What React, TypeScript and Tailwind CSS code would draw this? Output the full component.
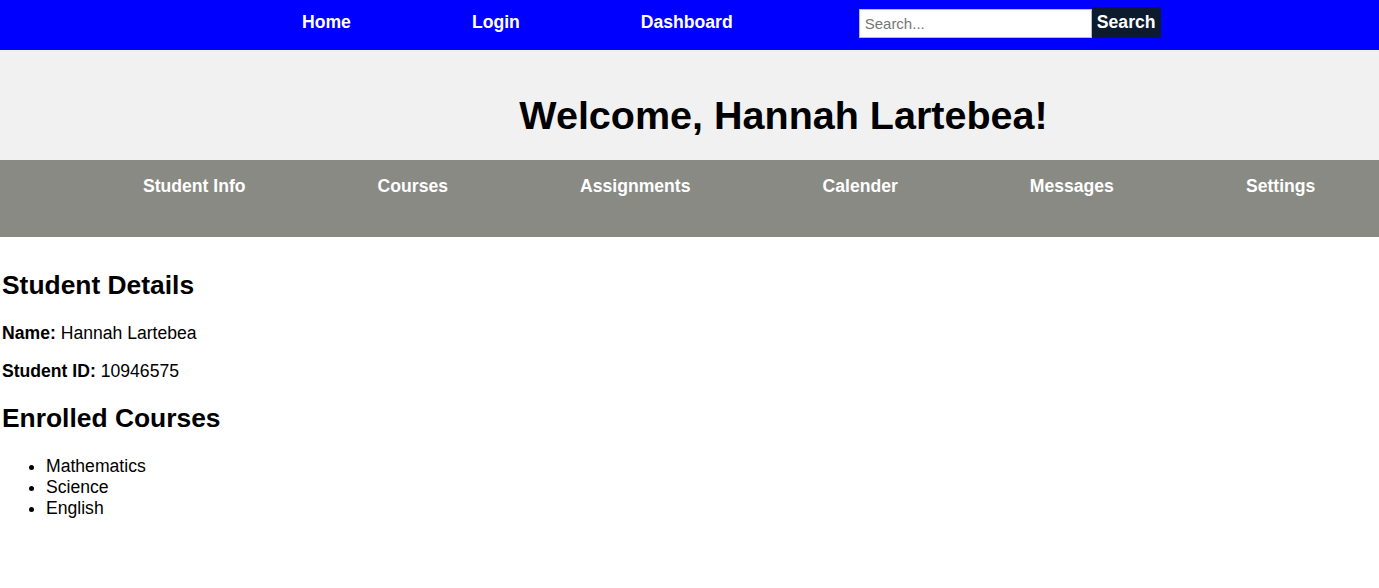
import React from 'react';

const App = () => {
  const topLinks = ['Home', 'Login', 'Dashboard'];
  const subLinks = ['Student Info', 'Courses', 'Assignments', 'Calender', 'Messages', 'Settings'];
  const courses = ['Mathematics', 'Science', 'English'];

  return (
    <div className="min-h-[588px] bg-white text-black font-['Liberation_Sans',Arial,sans-serif]">
      {/* top bar */}
      <nav className="flex h-[50px] items-start bg-[#0000ff] pl-[302px] pt-[7px]">
        <div className="flex items-center gap-[121px] pt-[7px]">
          {topLinks.map((link) => (
            <a key={link} href="#" className="text-[17.6px] font-bold leading-none text-white">
              {link}
            </a>
          ))}
        </div>
        <div className="ml-[126px] flex items-end">
          <input
            type="text"
            placeholder="Search..."
            className="h-[29px] w-[233px] border border-[#b6bcd8] bg-white px-[5px] text-[15px] text-black placeholder:text-[#767676] outline-none"
          />
          <button className="h-[31px] w-[69px] bg-[#0d1b2e] text-center text-[17.6px] font-bold leading-none text-white">
            Search
          </button>
        </div>
      </nav>

      {/* header */}
      <header className="flex h-[110px] items-center justify-center bg-[#f1f1f1] pl-[188px]">
        <h1 className="pt-[21px] text-[39.5px] font-bold leading-none">Welcome, Hannah Lartebea!</h1>
      </header>

      {/* section nav */}
      <nav className="h-[77px] bg-[#8a8a85] pl-[143px] pt-[17px]">
        <div className="flex gap-[132px]">
          {subLinks.map((link) => (
            <a key={link} href="#" className="text-[17.6px] font-bold leading-[18px] text-white">
              {link}
            </a>
          ))}
        </div>
      </nav>

      {/* content */}
      <main className="px-[2px]">
        <h2 className="mt-[33px] text-[26.4px] font-bold leading-[30px]">Student Details</h2>
        <p className="mt-[23px] text-[17.6px] leading-[20px]">
          <strong>Name:</strong> Hannah Lartebea
        </p>
        <p className="mt-[18px] text-[17.6px] leading-[20px]">
          <strong>Student ID:</strong> 10946575
        </p>
        <h2 className="mt-[22px] text-[26.4px] font-bold leading-[30px]">Enrolled Courses</h2>
        <ul className="mt-[23px] list-disc pl-[44px] text-[17.6px] leading-[21px]">
          {courses.map((c) => (
            <li key={c}>{c}</li>
          ))}
        </ul>
      </main>
    </div>
  );
};

export default App;
